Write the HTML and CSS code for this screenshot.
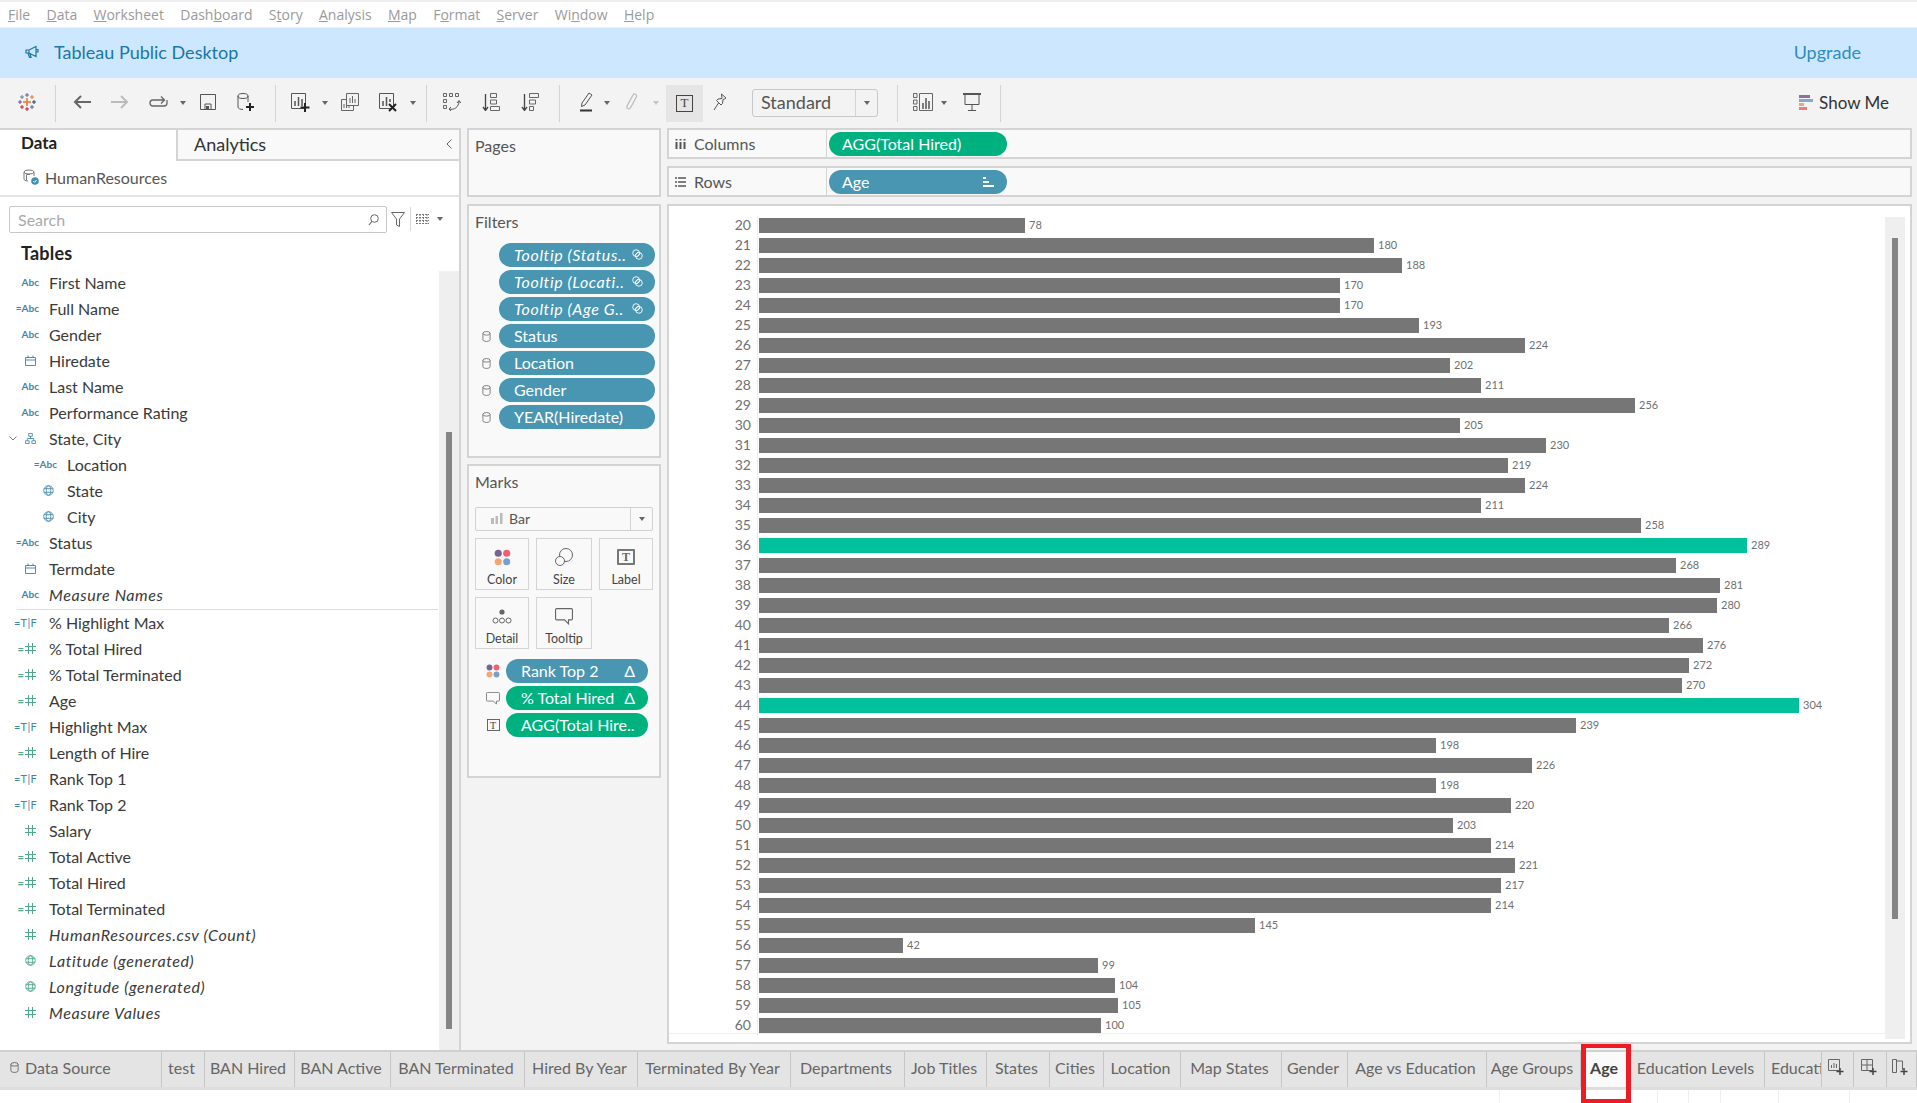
FILE: index.html
```html
<!DOCTYPE html>
<html lang="en">
  <head>
    <meta charset="UTF-8" />
    <title>Tableau Public Desktop</title>
    <link rel="stylesheet" href="styles.css">
  </head>
  <body>
    <svg class="defs" width="0" height="0">
      <symbol id="hash" viewBox="0 0 11 11"><path d="M3.5 0v11M7.5 0v11M0 3.5h11M0 7.5h11" fill="none" stroke="currentColor"/></symbol>
      <symbol id="cal" viewBox="0 0 11 11"><path d="M.5 2.5h10v8H.5zM.5 5h10M3 .5v2M8 .5v2" fill="none" stroke="currentColor"/></symbol>
      <symbol id="globe" viewBox="0 0 12 12"><g fill="none" stroke="currentColor"><circle cx="6" cy="6" r="5.2"/><ellipse cx="6" cy="6" rx="2.4" ry="5.2"/><path d="M1 4h10M1 8h10"/></g></symbol>
      <symbol id="tree" viewBox="0 0 12 12"><path d="M4 .5h4v3H4zM.5 8.5h4v3h-4zM7.5 8.5h4v3h-4zM6 3.5V6M2.5 8.5V6h7v2.5" fill="none" stroke="currentColor"/></symbol>
      <symbol id="db" viewBox="0 0 10 12"><g fill="none" stroke="currentColor"><ellipse cx="5" cy="2.5" rx="4" ry="2"/><path d="M1 2.5v7c0 1.1 1.8 2 4 2s4-.9 4-2v-7"/></g></symbol>
      <symbol id="link" viewBox="0 0 12 12"><g fill="none" stroke="currentColor"><circle cx="4.5" cy="4.5" r="3.7"/><circle cx="7.5" cy="7.5" r="3.7"/><path d="M3 7l4-4M5 9l4-4"/></g></symbol>
      <symbol id="tip" viewBox="0 0 16 15"><path d="M1.5.5h13a1 1 0 0 1 1 1v8a1 1 0 0 1-1 1h-2.5v3.5l-3.500-3.500h-7a1 1 0 0 1-1-1v-8a1 1 0 0 1 1-1z" fill="none" stroke="currentColor"/></symbol>
      <symbol id="dots" viewBox="0 0 20 20"><circle cx="5" cy="5" r="4.200" fill="#7b6294"/><circle cx="15" cy="5" r="4.200" fill="#f0616d"/><circle cx="5" cy="15" r="4.200" fill="#f4a671"/><circle cx="15" cy="15" r="4.200" fill="#7a9fcc"/></symbol>
    </svg>

    <div class="menubar">
      <span><u>F</u>ile</span><span><u>D</u>ata</span><span><u>W</u>orksheet</span><span>Dash<u>b</u>oard</span><span>S<u>t</u>ory</span><span><u>A</u>nalysis</span><span><u>M</u>ap</span><span>F<u>o</u>rmat</span><span><u>S</u>erver</span><span>Wi<u>n</u>dow</span><span><u>H</u>elp</span>
    </div>

    <div class="banner">
      <svg class="banner-icon" width="14" height="14" viewBox="0 0 14 14"><path d="M1 5h3l7-3.500v10L4 8H1zM4 5v3M3 8l1.500 4.500H6L5 8.500M11 4.500h2v2.500h-2" fill="none" stroke="#1c76a6" stroke-width="1.200"/></svg>
      <span class="banner-title">Tableau Public Desktop</span>
      <span class="upgrade">Upgrade</span>
    </div>

    <div class="toolbar">
      <div class="tgroup tg-logo">
        <svg width="18" height="18" viewBox="0 0 18 18">
          <path d="M9 5v8M5 9h8" stroke="#e8762c" stroke-width="1.500"/>
          <path d="M9 0v4M7 2h4" stroke="#5b6591" stroke-width="1"/>
          <path d="M9 14v4M7 16h4" stroke="#c72035" stroke-width="1"/>
          <path d="M0 9h4M2 7v4" stroke="#7b4f87" stroke-width="1"/>
          <path d="M14 9h4M16 7v4" stroke="#1f457e" stroke-width="1"/>
          <path d="M4 2v4M2 4h4" stroke="#59879b" stroke-width="1"/>
          <path d="M14 2v4M12 4h4" stroke="#e8762c" stroke-width="1"/>
          <path d="M4 12v4M2 14h4" stroke="#c72035" stroke-width="1"/>
          <path d="M14 12v4M12 14h4" stroke="#5b6591" stroke-width="1"/>
        </svg>
      </div>
      <div class="tgroup tg-a">
        <span class="tool"><svg width="18" height="14" viewBox="0 0 18 14"><path d="M18 7H2M8 1L2 7l6 6" fill="none" stroke="#666" stroke-width="2"/></svg></span>
        <span class="tool"><svg width="18" height="14" viewBox="0 0 18 14"><path d="M0 7h16M10 1l6 6-6 6" fill="none" stroke="#bbb" stroke-width="2"/></svg></span>
        <span class="tool"><svg width="19" height="12" viewBox="0 0 19 12"><path d="M1 7a3 3 0 0 1 3-3h11M12 .5L15.500 4 12 7.500M1 7a3 3 0 0 0 3 3h11a3 3 0 0 0 3-3V4" fill="none" stroke="#666" stroke-width="1.300"/></svg></span>
        <span class="caret"></span>
        <span class="tool"><svg width="16" height="16" viewBox="0 0 16 16"><path d="M.5.500h15v15H.5zM5 15.500V10h6v5.500" fill="none" stroke="#555"/><path d="M6 12h3v3H6z" fill="#555"/></svg></span>
        <span class="tool"><svg width="18" height="19" viewBox="0 0 18 19"><g fill="none" stroke="#555"><ellipse cx="6" cy="3" rx="5" ry="2.500"/><path d="M1 3v11c0 1.400 2.200 2.500 5 2.500M11 3v6"/></g><path d="M13 10v8M9 14h8" stroke="#222" stroke-width="2"/></svg></span>
      </div>
      <div class="tgroup tg-b">
        <span class="tool"><svg width="19" height="19" viewBox="0 0 19 19"><path d="M.5.500h14v15H.5z" fill="none" stroke="#555"/><path d="M4 8v5M7.500 4v9M11 6v7" stroke="#555" stroke-width="1.500"/><path d="M14 10v9M9.500 14.500h9" stroke="#222" stroke-width="2"/></svg></span>
        <span class="caret"></span>
        <span class="tool"><svg width="18" height="18" viewBox="0 0 18 18"><path d="M5.500.5h12v12h-12zM.5 6.500h5M.5 6.500v11h12v-5" fill="none" stroke="#666"/><path d="M9 5v5M11.500 3v7M14 6v4M3 11v4M5.500 12v3M8 13v2" stroke="#666"/></svg></span>
        <span class="tool"><svg width="19" height="19" viewBox="0 0 19 19"><path d="M.5.500h14v15H.5z" fill="none" stroke="#555"/><path d="M4 8v5M7.500 4v9M11 6v3" stroke="#555" stroke-width="1.500"/><path d="M10 11l7 7M17 11l-7 7" stroke="#222" stroke-width="2"/></svg></span>
        <span class="caret"></span>
      </div>
      <div class="tgroup tg-c">
        <span class="tool"><svg width="18" height="18" viewBox="0 0 18 18"><path d="M.5.500h3v3h-3zM6.500.500h3v3h-3zM12.500.500h3v3h-3zM.5 6.500h3v3h-3zM.5 12.500h3v3h-3z" fill="none" stroke="#666"/><path d="M6 16c5 1.500 10-2 10-8M14 10l2-2.500 1.800 2.500M8 14l-2 2 2 2" fill="none" stroke="#555"/></svg></span>
        <span class="tool"><svg width="18" height="18" viewBox="0 0 18 18"><path d="M8.500.5h6v4h-6zM8.500 7h6v4h-6zM8.500 13.500h9v4h-9z" fill="none" stroke="#666"/><path d="M3.500 1v16M1 14l2.500 3.500L6 14" fill="none" stroke="#444" stroke-width="1.300"/></svg></span>
        <span class="tool"><svg width="18" height="18" viewBox="0 0 18 18"><path d="M8.500.5h9v4h-9zM8.500 7h6v4h-6zM8.500 13.500h4v4h-4z" fill="none" stroke="#666"/><path d="M3.500 1v16M1 14l2.500 3.500L6 14" fill="none" stroke="#444" stroke-width="1.300"/></svg></span>
      </div>
      <div class="tgroup tg-d">
        <span class="tool-s"><svg width="14" height="20" viewBox="0 0 14 20"><path d="M3 11L10 1l3 2-7 10-3.500 1.500z" fill="none" stroke="#555"/><path d="M1 18.500h12" stroke="#333" stroke-width="2"/></svg></span>
        <span class="caret"></span>
        <span class="tool-s clip"><svg width="13" height="20" viewBox="0 0 13 20"><path d="M3 12l5-9c1-2 4-1 3.500 1.500L6 15c-1.500 3-5 2-4-1l5-9" fill="none" stroke="#bbb" stroke-width="1.200"/></svg></span>
        <span class="caret caret-light"></span>
        <span class="tool-on"><span class="t-box">T</span></span>
        <span class="tool-pin"><svg width="14" height="18" viewBox="0 0 14 18"><path d="M8.500 1L13 5l-1.500 1-1.500.500-.5 4-1.500 1.500L3.500 7.500 5 6l4-.5L8.500 1zM5.500 10L1 17" fill="none" stroke="#555"/></svg></span>
        <span class="std-select"><span class="std-text">Standard</span><span class="std-btn"><span class="caret"></span></span></span>
      </div>
      <div class="tgroup tg-e">
        <span class="tool-s"><svg width="20" height="18" viewBox="0 0 20 18"><path d="M.5.500h3.500v4H.5zM.5 7h3.500v4H.5zM.5 13.500h3.500v4H.5zM6.500.500h13v17h-13z" fill="none" stroke="#666"/><path d="M10 10v6M13 5v11M16 8v8" stroke="#555" stroke-width="1.500"/></svg></span>
        <span class="caret"></span>
        <span class="tool-s tool-present"><svg width="18" height="18" viewBox="0 0 18 18"><path d="M0 1h18" stroke="#555" stroke-width="2"/><path d="M2 1.500v10h14v-10M9 11.500V17M5 17.500h8" fill="none" stroke="#555"/></svg></span>
      </div>
      <div class="showme">
        <svg width="14" height="15" viewBox="0 0 14 15"><path d="M0 0h11v3H0z" fill="#8a7299"/><path d="M0 4h14v3H0z" fill="#87a8cc"/><path d="M0 8h5v3H0z" fill="#f4a671"/><path d="M0 12h8v3H0z" fill="#f27781"/></svg>
        <span>Show Me</span>
      </div>
    </div>

    <div class="workspace">
      <div class="sidebar">
        <div class="side-tabs">
          <div class="side-tab active">Data</div>
          <div class="side-tab">Analytics<svg class="collapse" width="6" height="10" viewBox="0 0 6 10"><path d="M5.500 .5L1 5l4.500 4.500" fill="none" stroke="#666"/></svg></div>
        </div>
        <div class="source">
          <svg width="16" height="16" viewBox="0 0 16 16"><g fill="none" stroke="#777"><ellipse cx="6" cy="3" rx="5" ry="2"/><path d="M1 3v7c0 1 1.500 2 4 2M11 3v4M3.500 5.500v6M7 5.500h-3"/></g><circle cx="12" cy="12" r="3.800" fill="#3f8fb5"/><path d="M10.300 12l1.300 1.300 2-2.300" fill="none" stroke="#fff"/></svg>
          <span>HumanResources</span>
        </div>
        <div class="search-row">
          <div class="search">Search<svg class="search-icon" width="11" height="12" viewBox="0 0 11 12"><circle cx="6.500" cy="4.500" r="3.800" fill="none" stroke="#666"/><path d="M3.800 7.500L1 11" stroke="#666" stroke-width="1.200"/></svg></div>
          <svg class="filter-icon" width="14" height="15" viewBox="0 0 14 15"><path d="M.5.500h13L8.500 7v7.500l-3-1.500V7z" fill="none" stroke="#666"/></svg>
          <span class="search-sep"></span>
          <svg class="grid-icon" width="13" height="11" viewBox="0 0 13 11"><path d="M0 .5h13M0 3.500h13M0 6.500h13M0 9.500h13M.5 0v10M4 0v10M7.500 0v10M11 0v10" stroke="#777" fill="none" stroke-dasharray="2 1"/></svg>
          <span class="caret"></span>
        </div>
        <div class="tables-title">Tables</div>
        <div class="field-wrap">
          <div class="fields">
            <div class="field"><span class="ficon"><span class="abc">Abc</span></span>First Name</div>
            <div class="field"><span class="ficon"><span class="abc">=Abc</span></span>Full Name</div>
            <div class="field"><span class="ficon"><span class="abc">Abc</span></span>Gender</div>
            <div class="field"><span class="ficon dim"><svg class="fsvg"><use href="#cal"/></svg></span>Hiredate</div>
            <div class="field"><span class="ficon"><span class="abc">Abc</span></span>Last Name</div>
            <div class="field"><span class="ficon"><span class="abc">Abc</span></span>Performance Rating</div>
            <div class="field"><span class="ficon dim"><svg class="chevron" width="8" height="5" viewBox="0 0 8 5"><path d="M.5.500L4 4 7.500.500" fill="none" stroke="#777"/></svg><svg class="fsvg"><use href="#tree"/></svg></span>State, City</div>
            <div class="field child"><span class="ficon"><span class="abc">=Abc</span></span>Location</div>
            <div class="field child"><span class="ficon dim"><svg class="fsvg"><use href="#globe"/></svg></span>State</div>
            <div class="field child"><span class="ficon dim"><svg class="fsvg"><use href="#globe"/></svg></span>City</div>
            <div class="field"><span class="ficon"><span class="abc">=Abc</span></span>Status</div>
            <div class="field"><span class="ficon dim"><svg class="fsvg"><use href="#cal"/></svg></span>Termdate</div>
            <div class="field gen"><span class="ficon"><span class="abc">Abc</span></span>Measure Names</div>
            <div class="field-sep"></div>
            <div class="field"><span class="ficon"><span class="tf">=T|F</span></span>% Highlight Max</div>
            <div class="field"><span class="ficon mes"><span class="eq">=</span><svg class="fsvg"><use href="#hash"/></svg></span>% Total Hired</div>
            <div class="field"><span class="ficon mes"><span class="eq">=</span><svg class="fsvg"><use href="#hash"/></svg></span>% Total Terminated</div>
            <div class="field"><span class="ficon mes"><span class="eq">=</span><svg class="fsvg"><use href="#hash"/></svg></span>Age</div>
            <div class="field"><span class="ficon"><span class="tf">=T|F</span></span>Highlight Max</div>
            <div class="field"><span class="ficon mes"><span class="eq">=</span><svg class="fsvg"><use href="#hash"/></svg></span>Length of Hire</div>
            <div class="field"><span class="ficon"><span class="tf">=T|F</span></span>Rank Top 1</div>
            <div class="field"><span class="ficon"><span class="tf">=T|F</span></span>Rank Top 2</div>
            <div class="field"><span class="ficon mes"><svg class="fsvg"><use href="#hash"/></svg></span>Salary</div>
            <div class="field"><span class="ficon mes"><span class="eq">=</span><svg class="fsvg"><use href="#hash"/></svg></span>Total Active</div>
            <div class="field"><span class="ficon mes"><span class="eq">=</span><svg class="fsvg"><use href="#hash"/></svg></span>Total Hired</div>
            <div class="field"><span class="ficon mes"><span class="eq">=</span><svg class="fsvg"><use href="#hash"/></svg></span>Total Terminated</div>
            <div class="field gen"><span class="ficon mes"><svg class="fsvg"><use href="#hash"/></svg></span>HumanResources.csv (Count)</div>
            <div class="field gen"><span class="ficon mes"><svg class="fsvg"><use href="#globe"/></svg></span>Latitude (generated)</div>
            <div class="field gen"><span class="ficon mes"><svg class="fsvg"><use href="#globe"/></svg></span>Longitude (generated)</div>
            <div class="field gen"><span class="ficon mes"><svg class="fsvg"><use href="#hash"/></svg></span>Measure Values</div>
          </div>
          <div class="side-scroll"><div class="side-thumb"></div></div>
        </div>
      </div>

      <div class="cards">
        <div class="card card-pages"><div class="card-title">Pages</div></div>
        <div class="card card-filters">
          <div class="card-title">Filters</div>
          <div class="pill-list">
            <div class="pill-row"><span class="pill-mark"></span><div class="pill blue gen-pill"><span>Tooltip (Status..</span><svg class="pill-link"><use href="#link"/></svg></div></div>
            <div class="pill-row"><span class="pill-mark"></span><div class="pill blue gen-pill"><span>Tooltip (Locati..</span><svg class="pill-link"><use href="#link"/></svg></div></div>
            <div class="pill-row"><span class="pill-mark"></span><div class="pill blue gen-pill"><span>Tooltip (Age G..</span><svg class="pill-link"><use href="#link"/></svg></div></div>
            <div class="pill-row"><span class="pill-mark"><svg class="db-icon"><use href="#db"/></svg></span><div class="pill blue">Status</div></div>
            <div class="pill-row"><span class="pill-mark"><svg class="db-icon"><use href="#db"/></svg></span><div class="pill blue">Location</div></div>
            <div class="pill-row"><span class="pill-mark"><svg class="db-icon"><use href="#db"/></svg></span><div class="pill blue">Gender</div></div>
            <div class="pill-row"><span class="pill-mark"><svg class="db-icon"><use href="#db"/></svg></span><div class="pill blue">YEAR(Hiredate)</div></div>
          </div>
        </div>
        <div class="card card-marks">
          <div class="card-title">Marks</div>
          <div class="mark-select">
            <svg width="13" height="11" viewBox="0 0 13 11"><path d="M1 5h3v6H1zM5.500 3h2.500v8H5.500zM10 0h2.500v11H10z" fill="#bbb"/></svg>
            <span>Bar</span>
            <span class="mark-btn"><span class="caret"></span></span>
          </div>
          <div class="mark-grid">
            <div class="mark-cell"><svg class="mc-dots"><use href="#dots"/></svg><span>Color</span></div>
            <div class="mark-cell"><svg width="18" height="18" viewBox="0 0 18 18"><g fill="none" stroke="#666"><circle cx="11" cy="7" r="6.500"/><circle cx="5" cy="13" r="4.500" fill="#fafafa"/></g></svg><span>Size</span></div>
            <div class="mark-cell"><span class="t-box t-big">T</span><span>Label</span></div>
            <div class="mark-cell"><svg width="20" height="16" viewBox="0 0 20 16"><circle cx="10" cy="3" r="2.600" fill="#666"/><g fill="none" stroke="#666"><circle cx="3.500" cy="11.500" r="2.500"/><circle cx="10" cy="11.500" r="2.500"/><circle cx="16.500" cy="11.500" r="2.500"/></g></svg><span>Detail</span></div>
            <div class="mark-cell"><svg class="mc-tip"><use href="#tip"/></svg><span>Tooltip</span></div>
          </div>
          <div class="pill-list mark-pills">
            <div class="pill-row"><span class="pill-mark"><svg class="mini-dots"><use href="#dots"/></svg></span><div class="pill blue"><span>Rank Top 2</span><span class="delta">Δ</span></div></div>
            <div class="pill-row"><span class="pill-mark"><svg class="mini-tip"><use href="#tip"/></svg></span><div class="pill green"><span>% Total Hired</span><span class="delta">Δ</span></div></div>
            <div class="pill-row"><span class="pill-mark"><span class="t-box t-mini">T</span></span><div class="pill green">AGG(Total Hire..</div></div>
          </div>
        </div>
      </div>

      <div class="stage">
        <div class="shelf">
          <div class="shelf-label"><svg width="11" height="10" viewBox="0 0 11 10"><path d="M1.500 3v7M5.500 3v7M9.500 3v7M1.500 0v1.500M5.500 0v1.500M9.500 0v1.500" stroke="#555" stroke-width="2"/></svg><span>Columns</span></div>
          <div class="pill green shelf-pill">AGG(Total Hired)</div>
        </div>
        <div class="shelf">
          <div class="shelf-label"><svg width="11" height="10" viewBox="0 0 11 10"><path d="M0 1h2M3 1h8M0 5h2M3 5h8M0 9h2M3 9h8" stroke="#555" stroke-width="1.500"/></svg><span>Rows</span></div>
          <div class="pill blue shelf-pill"><span>Age</span><svg class="sort-icon" width="11" height="11" viewBox="0 0 11 11"><path d="M0 1h3v2H0zM0 5h6v2H0zM0 9h11v2H0z" fill="#fff"/></svg></div>
        </div>
        <div class="viz">
          <div class="chart">
            <div class="row"><span class="age">20</span><div class="plot"><div class="bar" style="width:266px"></div><span class="val">78</span></div></div>
            <div class="row"><span class="age">21</span><div class="plot"><div class="bar" style="width:615px"></div><span class="val">180</span></div></div>
            <div class="row"><span class="age">22</span><div class="plot"><div class="bar" style="width:643px"></div><span class="val">188</span></div></div>
            <div class="row"><span class="age">23</span><div class="plot"><div class="bar" style="width:581px"></div><span class="val">170</span></div></div>
            <div class="row"><span class="age">24</span><div class="plot"><div class="bar" style="width:581px"></div><span class="val">170</span></div></div>
            <div class="row"><span class="age">25</span><div class="plot"><div class="bar" style="width:660px"></div><span class="val">193</span></div></div>
            <div class="row"><span class="age">26</span><div class="plot"><div class="bar" style="width:766px"></div><span class="val">224</span></div></div>
            <div class="row"><span class="age">27</span><div class="plot"><div class="bar" style="width:691px"></div><span class="val">202</span></div></div>
            <div class="row"><span class="age">28</span><div class="plot"><div class="bar" style="width:722px"></div><span class="val">211</span></div></div>
            <div class="row"><span class="age">29</span><div class="plot"><div class="bar" style="width:876px"></div><span class="val">256</span></div></div>
            <div class="row"><span class="age">30</span><div class="plot"><div class="bar" style="width:701px"></div><span class="val">205</span></div></div>
            <div class="row"><span class="age">31</span><div class="plot"><div class="bar" style="width:787px"></div><span class="val">230</span></div></div>
            <div class="row"><span class="age">32</span><div class="plot"><div class="bar" style="width:749px"></div><span class="val">219</span></div></div>
            <div class="row"><span class="age">33</span><div class="plot"><div class="bar" style="width:766px"></div><span class="val">224</span></div></div>
            <div class="row"><span class="age">34</span><div class="plot"><div class="bar" style="width:722px"></div><span class="val">211</span></div></div>
            <div class="row"><span class="age">35</span><div class="plot"><div class="bar" style="width:882px"></div><span class="val">258</span></div></div>
            <div class="row"><span class="age">36</span><div class="plot"><div class="bar top" style="width:988px"></div><span class="val">289</span></div></div>
            <div class="row"><span class="age">37</span><div class="plot"><div class="bar" style="width:917px"></div><span class="val">268</span></div></div>
            <div class="row"><span class="age">38</span><div class="plot"><div class="bar" style="width:961px"></div><span class="val">281</span></div></div>
            <div class="row"><span class="age">39</span><div class="plot"><div class="bar" style="width:958px"></div><span class="val">280</span></div></div>
            <div class="row"><span class="age">40</span><div class="plot"><div class="bar" style="width:910px"></div><span class="val">266</span></div></div>
            <div class="row"><span class="age">41</span><div class="plot"><div class="bar" style="width:944px"></div><span class="val">276</span></div></div>
            <div class="row"><span class="age">42</span><div class="plot"><div class="bar" style="width:930px"></div><span class="val">272</span></div></div>
            <div class="row"><span class="age">43</span><div class="plot"><div class="bar" style="width:923px"></div><span class="val">270</span></div></div>
            <div class="row"><span class="age">44</span><div class="plot"><div class="bar top" style="width:1040px"></div><span class="val">304</span></div></div>
            <div class="row"><span class="age">45</span><div class="plot"><div class="bar" style="width:817px"></div><span class="val">239</span></div></div>
            <div class="row"><span class="age">46</span><div class="plot"><div class="bar" style="width:677px"></div><span class="val">198</span></div></div>
            <div class="row"><span class="age">47</span><div class="plot"><div class="bar" style="width:773px"></div><span class="val">226</span></div></div>
            <div class="row"><span class="age">48</span><div class="plot"><div class="bar" style="width:677px"></div><span class="val">198</span></div></div>
            <div class="row"><span class="age">49</span><div class="plot"><div class="bar" style="width:752px"></div><span class="val">220</span></div></div>
            <div class="row"><span class="age">50</span><div class="plot"><div class="bar" style="width:694px"></div><span class="val">203</span></div></div>
            <div class="row"><span class="age">51</span><div class="plot"><div class="bar" style="width:732px"></div><span class="val">214</span></div></div>
            <div class="row"><span class="age">52</span><div class="plot"><div class="bar" style="width:756px"></div><span class="val">221</span></div></div>
            <div class="row"><span class="age">53</span><div class="plot"><div class="bar" style="width:742px"></div><span class="val">217</span></div></div>
            <div class="row"><span class="age">54</span><div class="plot"><div class="bar" style="width:732px"></div><span class="val">214</span></div></div>
            <div class="row"><span class="age">55</span><div class="plot"><div class="bar" style="width:496px"></div><span class="val">145</span></div></div>
            <div class="row"><span class="age">56</span><div class="plot"><div class="bar" style="width:144px"></div><span class="val">42</span></div></div>
            <div class="row"><span class="age">57</span><div class="plot"><div class="bar" style="width:339px"></div><span class="val">99</span></div></div>
            <div class="row"><span class="age">58</span><div class="plot"><div class="bar" style="width:356px"></div><span class="val">104</span></div></div>
            <div class="row"><span class="age">59</span><div class="plot"><div class="bar" style="width:359px"></div><span class="val">105</span></div></div>
            <div class="row"><span class="age">60</span><div class="plot"><div class="bar" style="width:342px"></div><span class="val">100</span></div></div>
          </div>
          <div class="viz-scroll"><div class="viz-thumb"></div></div>
        </div>
      </div>
    </div>

    <div class="tabs">
      <div class="tab tab-source"><svg class="db-icon tab-db"><use href="#db"/></svg>Data Source</div>
      <div class="tab">test</div>
      <div class="tab">BAN Hired</div>
      <div class="tab">BAN Active</div>
      <div class="tab">BAN Terminated</div>
      <div class="tab">Hired By Year</div>
      <div class="tab">Terminated By Year</div>
      <div class="tab">Departments</div>
      <div class="tab">Job Titles</div>
      <div class="tab">States</div>
      <div class="tab">Cities</div>
      <div class="tab">Location</div>
      <div class="tab">Map States</div>
      <div class="tab">Gender</div>
      <div class="tab">Age vs Education</div>
      <div class="tab">Age Groups</div>
      <div class="tab current">Age</div>
      <div class="tab">Education Levels</div>
      <div class="tab tab-cut">Educati</div>
      <div class="tab"><svg width="16" height="17" viewBox="0 0 16 17"><path d="M.5.500h11v11H.5z" fill="none" stroke="#666"/><path d="M3.500 6v3M6 4v5M8.500 5v4" stroke="#666"/><path d="M12 9v7M8.500 12.500h7" stroke="#444" stroke-width="1.500"/></svg></div>
      <div class="tab"><svg width="16" height="17" viewBox="0 0 16 17"><path d="M.5.500h11v11H.5zM6 .5v11M.5 6h11" fill="none" stroke="#666"/><path d="M12 9v7M8.500 12.500h7" stroke="#444" stroke-width="1.500"/></svg></div>
      <div class="tab"><svg width="16" height="17" viewBox="0 0 16 17"><path d="M.5.500h4v13h-4zM4.500 2h6v9" fill="none" stroke="#666"/><path d="M12 9v7M8.500 12.500h7" stroke="#444" stroke-width="1.500"/></svg></div>
    </div>
    <div class="statusbar"><span></span><span></span><span></span><span></span><span></span><span></span></div>

    <div class="annot"></div>
  </body>
</html>
```
FILE: styles.css
```css
* {
  margin: 0;
  padding: 0;
  box-sizing: border-box;
}
html,
body {
  height: 100%;
}
body {
  position: relative;
  display: flex;
  flex-direction: column;
  height: 1103px;
  overflow: hidden;
  background: #fff;
  font-family: Lato, "Open Sans", sans-serif;
  font-size: 16px;
  color: #333;
}
.defs {
  position: absolute;
}

/* top bars */
.menubar {
  display: flex;
  align-items: center;
  height: 28px;
  padding: 0 0 0 8px;
  gap: 16.3px;
  border-top: 2px solid #f0f0f0;
  border-bottom: 1px solid #eee;
  font-family: "Open Sans", sans-serif;
  font-size: 14px;
  color: #9a9a9a;
}
.banner {
  display: flex;
  align-items: center;
  height: 50px;
  padding: 0 56px 2px 25px;
  background: #cde8fe;
  font-size: 18px;
}
.banner-icon {
  margin-right: 15px;
}
.banner-title {
  color: #1c76a6;
}
.upgrade {
  margin-left: auto;
  color: #2f8cc4;
}
.toolbar {
  display: flex;
  align-items: center;
  height: 50px;
  background: #f3f3f3;
}
.tgroup {
  display: flex;
  align-items: center;
  height: 37px;
  border-right: 1px solid #d4d4d4;
}
.tg-logo {
  width: 56px;
  padding: 0 0 2px 18px;
}
.tg-a {
  width: 220px;
  padding-left: 7px;
}
.tg-b {
  width: 151px;
  padding-left: 5px;
}
.tg-c {
  width: 133px;
  padding-left: 6px;
  gap: 1px;
}
.tg-d {
  width: 338px;
  padding-left: 11px;
}
.tg-e {
  width: 103px;
  padding-left: 10px;
}
.tool,
.tool-s,
.tool-pin,
.tool-on {
  display: flex;
  align-items: center;
  justify-content: center;
  flex: none;
}
.tool svg,
.tool-s svg,
.tool-pin svg {
  margin-bottom: 2px;
}
.tool {
  width: 38px;
}
.tool-s {
  width: 30px;
}
.clip {
  margin-left: 3px;
  margin-right: 4px;
}
.tool-present {
  margin-left: 7px;
}
.tool-on {
  width: 37px;
  height: 37px;
  margin-left: 4px;
  background: #e5e5e5;
}
.tool-pin {
  width: 34px;
}
.caret {
  display: inline-block;
  flex: none;
  width: 0;
  height: 0;
  margin: 0 3px;
  border-left: 3px solid transparent;
  border-right: 3px solid transparent;
  border-top: 4px solid #666;
}
.caret-light {
  border-top-color: #c4c4c4;
}
.t-box {
  display: flex;
  align-items: center;
  justify-content: center;
  width: 17px;
  height: 17px;
  border: 1px solid #444;
  font-family: "Liberation Serif", serif;
  font-size: 13px;
  color: #444;
}
.std-select {
  display: flex;
  align-items: center;
  width: 126px;
  height: 28px;
  margin-left: 15px;
  border: 1px solid #c8c8c8;
  border-radius: 3px;
  font-size: 18px;
  color: #555;
}
.std-text {
  flex: 1;
  padding: 0 0 2px 8px;
}
.std-btn {
  display: flex;
  align-items: center;
  justify-content: center;
  width: 22px;
  height: 26px;
  border-left: 1px solid #d4d4d4;
}
.showme {
  display: flex;
  align-items: center;
  gap: 6px;
  margin-left: auto;
  padding: 0 28px 2px 0;
  font-size: 17px;
  color: #333;
}

/* workspace */
.workspace {
  display: flex;
  height: 922px;
  background: #f3f3f3;
}
.sidebar {
  display: flex;
  flex-direction: column;
  flex: none;
  width: 461px;
  border-right: 2px solid #d4d4d4;
  background: #fff;
}
.side-tabs {
  display: flex;
  height: 33px;
}
.side-tab {
  position: relative;
  flex: 1;
  padding: 3px 0 0 16px;
  border-top: 2px solid #d4d4d4;
  border-bottom: 2px solid #d4d4d4;
  background: #f9f9f9;
  font-size: 18px;
}
.side-tab.active {
  flex: none;
  width: 178px;
  padding: 2px 0 0 21px;
  border-right: 2px solid #d4d4d4;
  border-bottom: none;
  background: #fff;
  font-weight: 700;
  font-size: 17px;
  color: #222;
}
.collapse {
  position: absolute;
  right: 7px;
  top: 9px;
}
.source {
  display: flex;
  align-items: center;
  gap: 6px;
  height: 36px;
  padding: 0 0 2px 23px;
  border-bottom: 2px solid #e4e4e4;
  color: #555;
}
.search-row {
  display: flex;
  align-items: center;
  height: 44px;
  padding-left: 9px;
}
.search {
  position: relative;
  display: flex;
  align-items: center;
  width: 378px;
  height: 27px;
  padding-left: 8px;
  border: 1px solid #c8c8c8;
  border-radius: 2px;
  color: #aaa;
}
.search-icon {
  position: absolute;
  right: 7px;
  top: 7px;
}
.filter-icon {
  margin-left: 4px;
}
.search-sep {
  width: 1px;
  height: 24px;
  margin: 0 5px 0 5px;
  background: #d8d8d8;
}
.grid-icon {
  margin-right: 5px;
}
.tables-title {
  height: 30px;
  padding: 1px 0 0 21px;
  font-size: 18px;
  font-weight: 700;
  letter-spacing: .2px;
  color: #222;
}
.field-wrap {
  display: flex;
  flex: 1;
  min-height: 0;
}
.fields {
  flex: 1;
  min-width: 0;
}
.field {
  display: flex;
  align-items: center;
  height: 26px;
  padding-bottom: 4px;
  color: #3a3a3a;
}
.field.child {
  padding-left: 18px;
}
.field.gen {
  font-style: italic;
  letter-spacing: .6px;
}
.ficon {
  display: flex;
  align-items: center;
  justify-content: flex-end;
  flex: none;
  width: 39px;
  margin-right: 10px;
  letter-spacing: 0;
  color: #3f87a5;
}
.ficon.dim {
  color: #4a8fae;
}
.ficon.mes {
  color: #4ea88a;
}
.abc {
  font-size: 10px;
  font-weight: 700;
  font-style: normal;
}
.tf {
  margin-right: 2px;
  font-size: 11px;
  font-style: normal;
  letter-spacing: .3px;
}
.eq {
  margin-right: 1px;
  font-size: 11px;
  font-weight: 700;
}
.fsvg {
  width: 11px;
  height: 11px;
  margin-right: 3px;
}
.chevron {
  margin-right: 8px;
}
.field-sep {
  height: 1px;
  margin: 0 1px 1px 17px;
  background: #dcdcdc;
}
.side-scroll {
  flex: none;
  width: 20px;
  padding-top: 161px;
  background: #efefef;
}
.side-thumb {
  width: 6px;
  height: 597px;
  margin-left: 7px;
  background: #858585;
}

/* cards */
.cards {
  display: flex;
  flex-direction: column;
  flex: none;
  gap: 6px;
  width: 194px;
  margin-left: 6px;
}
.card {
  border: 2px solid #d4d4d4;
  background: #f9f9f9;
  padding-left: 6px;
}
.card-pages {
  height: 69px;
  margin-bottom: 1px;
}
.card-filters {
  height: 254px;
}
.card-marks {
  height: 314px;
}
.card-title {
  height: 35px;
  padding-top: 6px;
  color: #555;
}
.pill-list {
  display: flex;
  flex-direction: column;
  gap: 3px;
}
.pill-row {
  display: flex;
  align-items: center;
  height: 24px;
}
.pill-mark {
  display: flex;
  justify-content: center;
  flex: none;
  width: 24px;
  padding-right: 2px;
  color: #777;
}
.pill {
  display: flex;
  align-items: center;
  justify-content: space-between;
  height: 24px;
  border-radius: 12px;
  padding: 0 8px 2px 15px;
  font-size: 16px;
  color: #fff;
  white-space: nowrap;
}
.pill.blue {
  background: #4996b2;
}
.pill.green {
  background: #00b180;
}
.card-filters .pill-list {
  margin-top: 2px;
}
.card-filters .pill {
  width: 156px;
}
.gen-pill {
  padding-right: 12px;
  font-style: italic;
  letter-spacing: .6px;
}
.pill-link {
  flex: none;
  width: 11px;
  height: 11px;
}
.db-icon {
  width: 9px;
  height: 11px;
}
.mark-select {
  display: flex;
  align-items: center;
  gap: 6px;
  width: 178px;
  height: 24px;
  margin: 6px 0 7px 0;
  padding: 0 0 2px 14px;
  border: 1px solid #d0d0d0;
  border-radius: 2px;
  font-size: 14px;
  color: #555;
}
.mark-btn {
  display: flex;
  align-items: center;
  justify-content: center;
  width: 22px;
  height: 22px;
  margin: 2px 0 0 auto;
  border-left: 1px solid #d4d4d4;
}
.mark-grid {
  display: grid;
  grid-template-columns: 54px 56px 54px;
  grid-auto-rows: 52px;
  gap: 7px;
  width: 178px;
}
.mark-cell {
  display: flex;
  flex-direction: column;
  align-items: center;
  justify-content: flex-end;
  gap: 6px;
  padding-bottom: 2px;
  border: 1px solid #d4d4d4;
  font-size: 12.5px;
  color: #444;
}
.mc-dots {
  width: 17px;
  height: 17px;
}
.mc-tip {
  width: 18px;
  height: 17px;
  color: #666;
}
.t-big {
  width: 18px;
  height: 16px;
  margin-bottom: 1px;
  border: 2px solid #777;
  border-radius: 1px;
  font-size: 12px;
  font-weight: 700;
  color: #666;
}
.mark-pills {
  margin: 10px 0 0 7px;
}
.mark-pills .pill {
  width: 142px;
}
.mini-dots {
  width: 14px;
  height: 14px;
}
.mini-tip {
  width: 14px;
  height: 13px;
}
.t-mini {
  width: 13px;
  height: 12px;
  border-color: #666;
  font-size: 10px;
}
.delta {
  margin-right: 5px;
}

/* shelves and chart */
.stage {
  display: flex;
  flex-direction: column;
  flex: 1;
  gap: 7px;
  min-width: 0;
  margin: 0 5px 6px 6px;
}
.shelf {
  display: flex;
  align-items: center;
  flex: none;
  height: 31px;
  border: 2px solid #d4d4d4;
  background: #f9f9f9;
  color: #555;
}
.shelf-label {
  display: flex;
  align-items: center;
  gap: 8px;
  width: 158px;
  height: 100%;
  padding-left: 6px;
  border-right: 1px solid #d4d4d4;
}
.shelf-pill {
  width: 178px;
  margin: 1px 0 0 2px;
  padding: 0 12px 2px 13px;
}
.sort-icon {
  margin-right: 1px;
}
.viz {
  display: flex;
  flex: 1;
  min-height: 0;
  padding-top: 10px;
  border: 2px solid #d4d4d4;
  background: #fff;
}
.chart {
  flex: 1;
  min-width: 0;
  height: 818px;
  border-bottom: 1px solid #efefef;
}
.row {
  display: flex;
  height: 20px;
}
.age {
  flex: none;
  width: 82px;
  text-align: right;
  font-size: 14px;
  line-height: 17px;
  color: #707070;
}
.plot {
  display: flex;
  flex: 1;
  margin-left: 6px;
  padding-top: 2px;
  padding-left: 1px;
  border-left: 1px solid #eee;
}
.bar {
  flex: none;
  height: 15px;
  background: #767676;
}
.bar.top {
  background: #00c19b;
}
.val {
  margin-left: 4px;
  font-size: 11px;
  line-height: 14px;
  color: #707070;
}
.viz-scroll {
  flex: none;
  width: 20px;
  height: 822px;
  margin: 1px 5px 0 0;
  padding-top: 21px;
  background: #efefef;
}
.viz-thumb {
  width: 6px;
  height: 681px;
  margin-left: 7px;
  background: #858585;
}

/* sheet tabs */
.tabs {
  display: grid;
  grid-template-columns: 162px 43px 90px 96px 134px 113px 153px 114px 82px 63px 54px 77px 101px 66px 139px 94px 49px 135px 57px 32px 33px 30px;
  height: 40px;
  border-top: 2px solid #d0d0d0;
  border-bottom: 3px solid #dedede;
  background: #e4e4e4;
}
.tab {
  display: flex;
  align-items: center;
  justify-content: center;
  overflow: hidden;
  padding: 0 3px 5px 0;
  border-right: 1px solid #c6c6c6;
  color: #666;
  white-space: nowrap;
}
.tab-source {
  justify-content: flex-start;
  padding-left: 10px;
}
.tab-db {
  margin-right: 6px;
}
.tab-cut {
  justify-content: flex-start;
  padding-left: 6px;
}
.tab.current {
  border-right: none;
  background: #fafafa;
  font-weight: 700;
  color: #444;
}
.statusbar {
  display: grid;
  grid-template-columns: 1500px 158px 31px 32px 58px 71px;
  flex: 1;
}
.statusbar span {
  border-right: 1px solid #eee;
}

/* red box drawn over the Age tab */
.annot {
  position: absolute;
  left: 1581px;
  top: 1044px;
  width: 50px;
  height: 59px;
  border: 5px solid #ed1c24;
  border-top-width: 4px;
  border-bottom-width: 4px;
}
```
